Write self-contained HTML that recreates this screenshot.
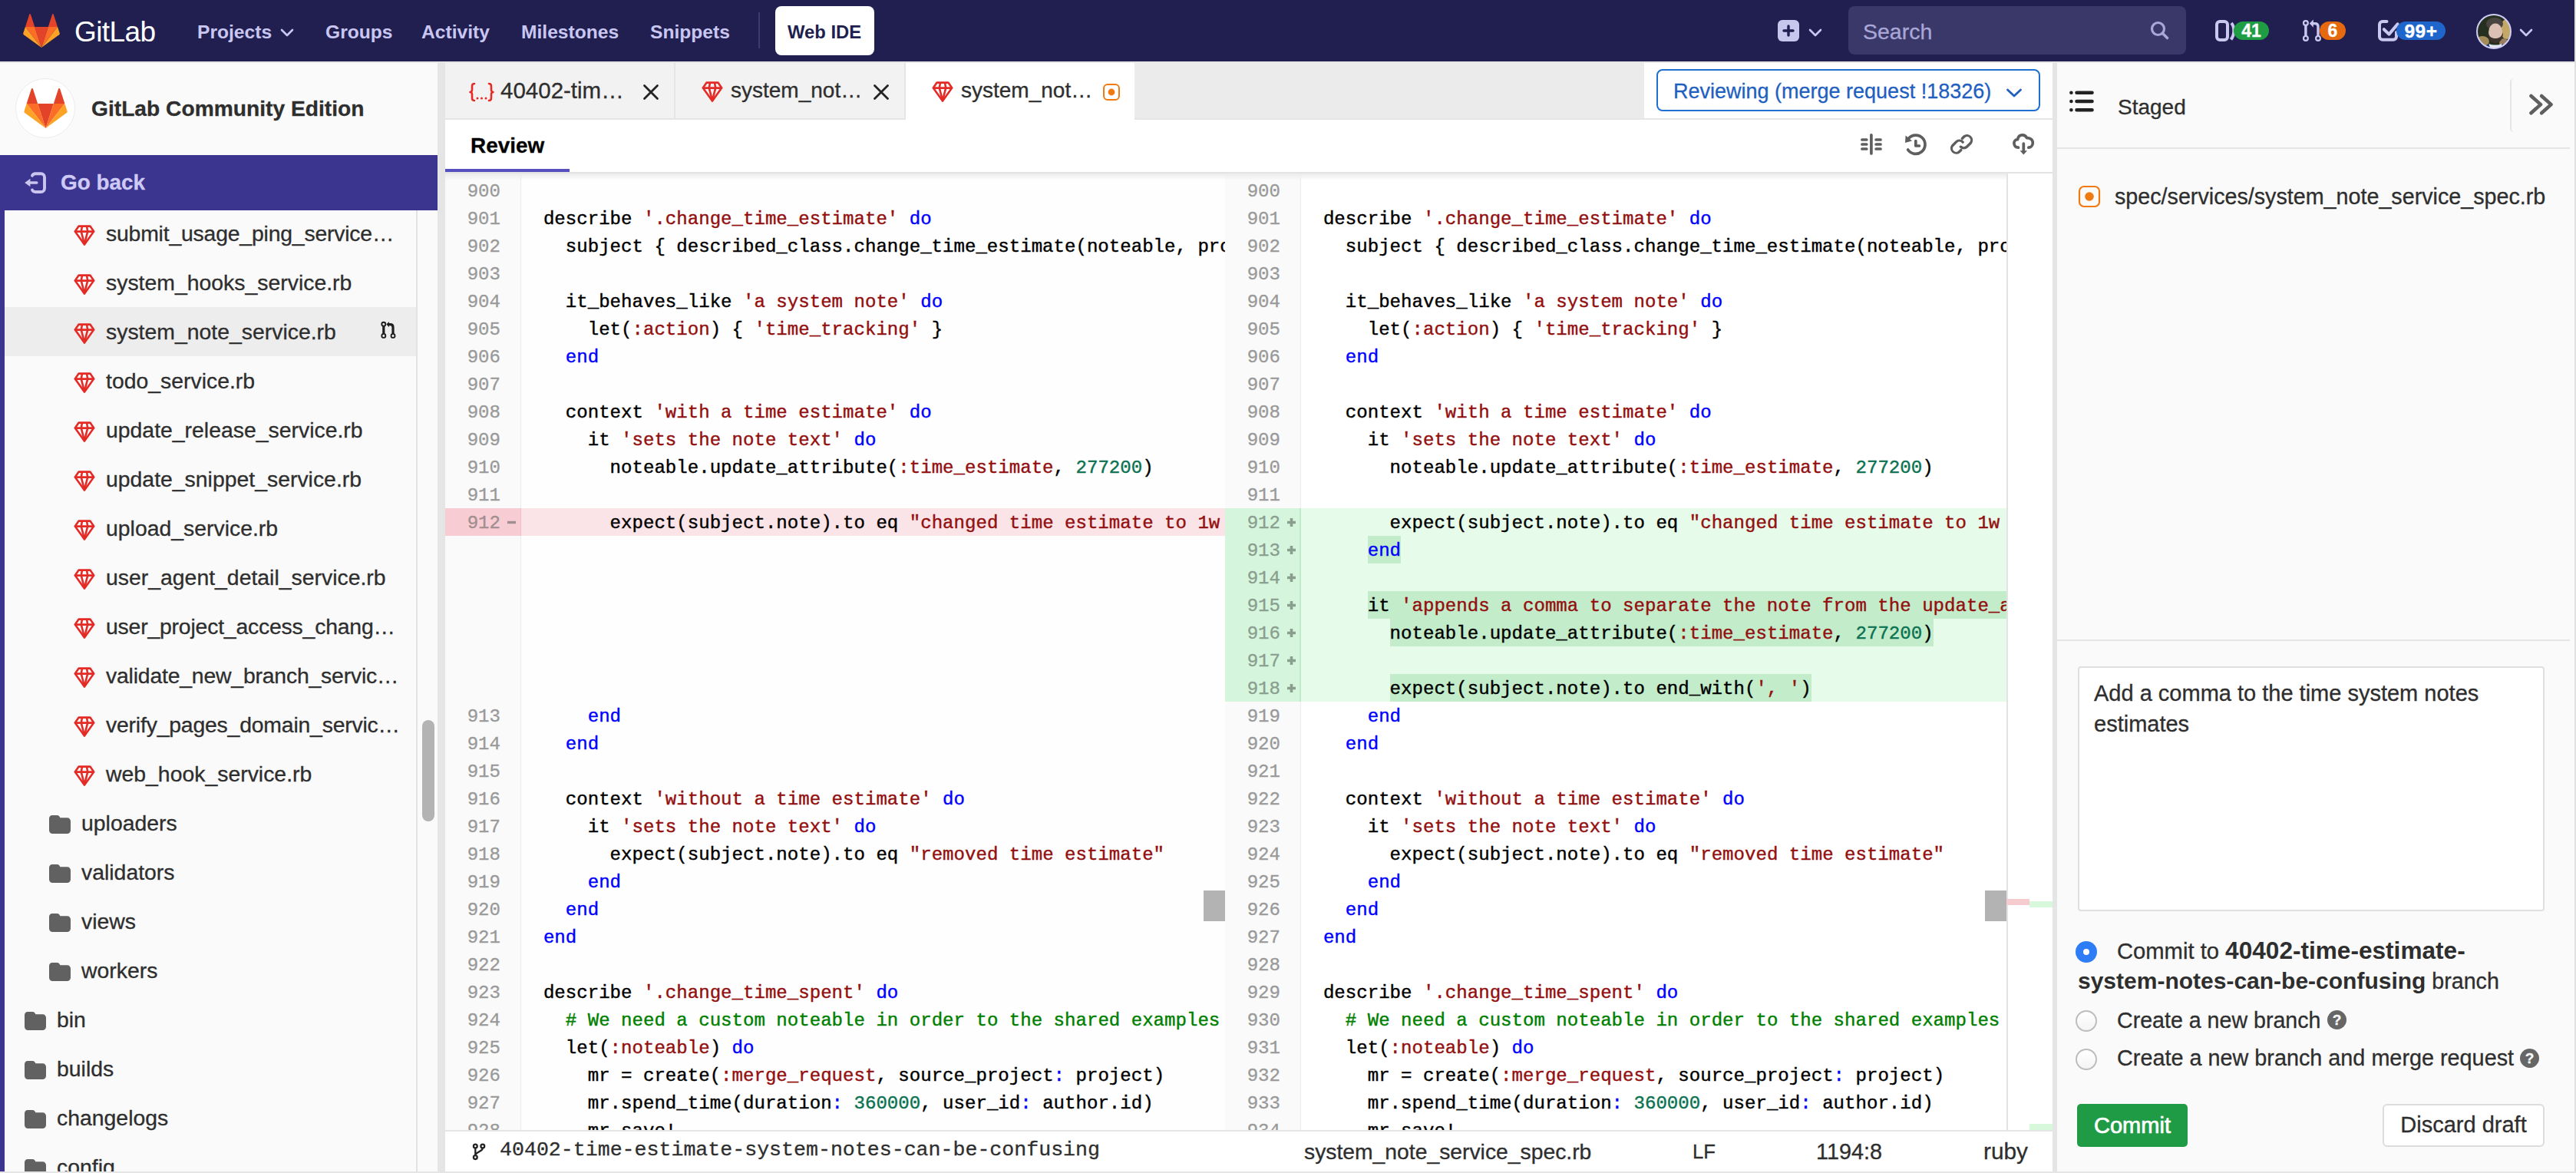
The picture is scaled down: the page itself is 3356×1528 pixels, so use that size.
<!DOCTYPE html>
<html><head><meta charset="utf-8">
<style>
*{box-sizing:border-box;margin:0;padding:0}
html,body{width:3356px;height:1528px;overflow:hidden;background:#fafafa;font-family:"Liberation Sans",sans-serif;color:#2e2e2e;-webkit-text-stroke:0.3px}
b,.nav{-webkit-text-stroke:0}
.a{position:absolute}
#hdr{position:absolute;left:0;top:0;width:3354px;height:80px;background:#201f50}
.nav{position:absolute;top:2px;height:80px;line-height:80px;font-weight:bold;font-size:24.6px;color:#c9c7f2;white-space:nowrap}
.chev{position:absolute}
#side{position:absolute;left:0;top:80px;width:570px;height:1446px;background:#fafafa;overflow:hidden}
.row{position:absolute;left:6px;width:536px;height:64px}
.row.act{background:#ededed}
.gem{position:absolute}
.tn{position:absolute;top:0;line-height:64px;font-size:28.4px;color:#2e2e2e;white-space:nowrap}
.tab{position:absolute;top:82px;height:72px;background:#f2f2f2;border-right:2px solid #e5e5e5}
.tabt{position:absolute;top:0;line-height:72px;font-size:28px;color:#2e2e2e;white-space:nowrap}
.ed{position:absolute;top:224px;height:1248px;overflow:hidden}
.gut{position:absolute;top:0;left:0;width:99px;height:1248px;background:#fafafa;border-right:1px solid #ececec}
.code{position:absolute;top:0;left:99px;height:1248px;overflow:hidden}
.ln{position:absolute;left:0;width:72px;text-align:right;height:36px;line-height:36px;font-family:"Liberation Mono",monospace;font-size:24.08px;color:#999}
.sg{position:absolute;left:78px;width:18px;text-align:center;height:36px;line-height:36px;font-family:"Liberation Mono",monospace;font-size:24px;color:#9aa}
.sg.del{color:#a99}
.sg.add{color:#8a9a8c}
.rg{position:absolute;left:0;width:99px;height:36px}
.rc{position:absolute;left:99px;right:0;height:36px}
.del-g{background:#f7ccd2;border-right:1px solid #f0c0c6}
.del-c{background:#fbe4e7}
.add-g{background:#d5f6dc;border-right:2px solid #c0ebc9}
.ladd{color:#8a9e8f} .ldel{color:#a08e91}
.add-c{background:#e7fbea}
.hl{position:absolute;height:36px;background:#c3ecca;margin-left:99px}
.cl{position:absolute;left:0;height:36px;line-height:36px;font-family:"Liberation Mono",monospace;font-size:24.08px;color:#000;white-space:pre;-webkit-text-stroke:0.4px}
i{font-style:normal}
.s{color:#930f0f} .k{color:#0000ff} .n{color:#0b7252} .c{color:#008000}
.sb{position:absolute;top:-2px;line-height:52px;font-size:28px;color:#2e2e2e;white-space:nowrap}
.radio{position:absolute;left:2704px;width:28px;height:28px;border-radius:50%;border:2px solid #bdbdbd;background:linear-gradient(#fff,#f4f4f4)}
.rl{position:absolute;left:2758px;font-size:28.6px;color:#2e2e2e;white-space:nowrap;line-height:40px}
.q{position:absolute;width:25px;height:25px;border-radius:50%;background:#666;color:#fafafa;font-weight:bold;font-size:19px;text-align:center;line-height:25px}
</style></head><body>

<!-- HEADER -->
<div id="hdr">
  <svg class="a" style="left:30px;top:18px" width="48" height="44" viewBox="0 0 210 194"><path d="M105.06 193.66L143.7 74.73H66.42z" fill="#e24329"/><path d="M105.06 193.65L66.42 74.73H12.27z" fill="#fc6d26"/><path d="M12.27 74.73L.53 110.87c-1.07 3.3.1 6.91 2.9 8.95l101.63 73.84z" fill="#fca326"/><path d="M12.27 74.73h54.15L43.15 3.11c-1.2-3.68-6.41-3.68-7.61 0z" fill="#e24329"/><path d="M105.06 193.65l38.64-118.92h54.15z" fill="#fc6d26"/><path d="M197.85 74.73l11.74 36.14c1.07 3.3-.1 6.91-2.9 8.95l-101.63 73.83z" fill="#fca326"/><path d="M197.85 74.73H143.7l23.26-71.62c1.2-3.68 6.41-3.68 7.61 0z" fill="#e24329"/></svg>
  <div class="a" style="left:97px;top:2px;height:80px;line-height:80px;font-size:37px;color:#fff;letter-spacing:-0.6px;-webkit-text-stroke:0">GitLab</div>
  <div class="nav" style="left:257px">Projects</div>
  <svg class="chev" style="left:365px;top:37px" width="18" height="12" viewBox="0 0 18 12"><path d="M2 2L9 9L16 2" fill="none" stroke="#c9c7f2" stroke-width="2.6" stroke-linecap="round" stroke-linejoin="round"/></svg>
  <div class="nav" style="left:424px">Groups</div>
  <div class="nav" style="left:549px">Activity</div>
  <div class="nav" style="left:679px">Milestones</div>
  <div class="nav" style="left:847px">Snippets</div>
  <div class="a" style="left:988px;top:16px;width:2px;height:47px;background:#3c3a6e"></div>
  <div class="a" style="left:1010px;top:8px;width:129px;height:64px;background:#fff;border-radius:8px"></div>
  <div class="nav" style="left:1026px;color:#201f50;font-size:23.8px">Web IDE</div>

  <div class="a" style="left:2316px;top:26px;width:28px;height:28px;background:#c9c6ee;border-radius:6px"></div>
  <svg class="a" style="left:2316px;top:26px" width="28" height="28" viewBox="0 0 28 28"><path d="M14 8V20M8 14H20" stroke="#201f50" stroke-width="3.4" stroke-linecap="round"/></svg>
  <svg class="chev" style="left:2356px;top:37px" width="18" height="12" viewBox="0 0 18 12"><path d="M2 2L9 9L16 2" fill="none" stroke="#c9c7f2" stroke-width="2.6" stroke-linecap="round" stroke-linejoin="round"/></svg>
  <div class="a" style="left:2408px;top:8px;width:440px;height:63px;background:#3a3869;border-radius:8px"></div>
  <div class="a" style="left:2427px;top:10px;line-height:63px;font-size:28.5px;color:#a9a7d8">Search</div>
  <svg class="a" style="left:2800px;top:27px" width="28" height="26" viewBox="0 0 28 26"><circle cx="11.5" cy="10.5" r="8" fill="none" stroke="#a9a7d8" stroke-width="3.2"/><path d="M17.5 16.5L23.5 22.5" stroke="#a9a7d8" stroke-width="3.6" stroke-linecap="round"/></svg>

  <svg class="a" style="left:2880px;top:18px" width="34" height="44" viewBox="0 0 34 44"><rect x="8" y="10" width="14" height="24" rx="4" fill="none" stroke="#cbc8f0" stroke-width="4"/><path d="M27 12C31.5 17 31.5 27 26.5 33.5" fill="none" stroke="#cbc8f0" stroke-width="4"/></svg>
  <div class="a" style="left:2910px;top:28px;width:46px;height:24px;border-radius:12px;background:#1f9d45;color:#fff;font-weight:bold;font-size:23px;line-height:25px;text-align:center">41</div>
  <svg class="a" style="left:2990px;top:18px" width="34" height="44" viewBox="0 0 34 44"><g fill="none" stroke="#cbc8f0"><circle cx="13.9" cy="12" r="2.9" stroke-width="2.2"/><circle cx="13.9" cy="31.9" r="2.9" stroke-width="2.2"/><circle cx="30" cy="31.9" r="2.9" stroke-width="2.2"/><path d="M13.9 15V28.9M23 12.6H26C28.5 12.6 30 14 30 16.5V28.9" stroke-width="3.4"/></g><path d="M18.8 12.6L23.8 7.4V17.8Z" fill="#cbc8f0"/></svg>
  <div class="a" style="left:3022px;top:28px;width:34px;height:24px;border-radius:12px;background:#e6690f;color:#fff;font-weight:bold;font-size:23px;line-height:25px;text-align:center">6</div>
  <svg class="a" style="left:3090px;top:18px" width="40" height="44" viewBox="0 0 40 44"><g fill="none" stroke="#cbc8f0" stroke-width="4" stroke-linecap="round" stroke-linejoin="round"><path d="M19.5 10H14A4 4 0 0 0 10 14V29.7A4 4 0 0 0 14 33.7H28A4 4 0 0 0 32 29.7V24"/><path d="M15.8 20.2L22.4 26.6L33.6 13.4"/></g></svg>
  <div class="a" style="left:3122px;top:28px;width:64px;height:24px;border-radius:12px;background:#1f66cc;color:#fff;font-weight:bold;font-size:24.5px;line-height:25px;text-align:center;letter-spacing:0.5px">99+</div>
  <svg class="a" style="left:3226px;top:18px" width="46" height="46" viewBox="0 0 46 46"><defs><clipPath id="av"><circle cx="23" cy="23" r="22"/></clipPath></defs><g clip-path="url(#av)"><rect width="46" height="46" fill="#263020"/><ellipse cx="40" cy="20" rx="9" ry="13" fill="#c4a868"/><ellipse cx="8" cy="36" rx="9" ry="7" fill="#a48c58"/><ellipse cx="36" cy="38" rx="6" ry="6" fill="#9a8060"/><ellipse cx="24" cy="13" rx="11" ry="8" fill="#4a4440"/><ellipse cx="25" cy="24" rx="9" ry="11.5" fill="#dcc0b4"/><path d="M15 24C15 33 19 38 25 38C31 38 35 33 35 24C33 30 30 32 25 32C20 32 17 30 15 24Z" fill="#3e322c"/><path d="M14 46L17 39C20 41 30 41 33 39L36 46Z" fill="#e6e8f0"/><path d="M6 46L16 39L19 46Z M44 46L34 39L31 46Z" fill="#1c3a7a"/></g><circle cx="23" cy="23" r="22" fill="none" stroke="#d0cdf5" stroke-width="2"/></svg>
  <svg class="chev" style="left:3282px;top:37px" width="18" height="12" viewBox="0 0 18 12"><path d="M2 2L9 9L16 2" fill="none" stroke="#c9c7f2" stroke-width="2.6" stroke-linecap="round" stroke-linejoin="round"/></svg>
</div>
<div class="a" style="left:3354px;top:0;width:2px;height:1528px;background:#e0e0e0"></div>
<div class="a" style="left:0;top:1526px;width:3356px;height:2px;background:#e5e5e5"></div>

<!-- SIDEBAR -->
<div id="side">
  <div class="a" style="left:20px;top:22px;width:78px;height:78px;border-radius:50%;background:#fff;border:1px solid #ececec"></div>
  <svg class="a" style="left:31px;top:35px" width="57" height="52" viewBox="0 0 210 194"><path d="M105.06 193.66L143.7 74.73H66.42z" fill="#e24329"/><path d="M105.06 193.65L66.42 74.73H12.27z" fill="#fc6d26"/><path d="M12.27 74.73L.53 110.87c-1.07 3.3.1 6.91 2.9 8.95l101.63 73.84z" fill="#fca326"/><path d="M12.27 74.73h54.15L43.15 3.11c-1.2-3.68-6.41-3.68-7.61 0z" fill="#e24329"/><path d="M105.06 193.65l38.64-118.92h54.15z" fill="#fc6d26"/><path d="M197.85 74.73l11.74 36.14c1.07 3.3-.1 6.91-2.9 8.95l-101.63 73.83z" fill="#fca326"/><path d="M197.85 74.73H143.7l23.26-71.62c1.2-3.68 6.41-3.68 7.61 0z" fill="#e24329"/></svg>
  <div class="a" style="left:119px;top:22px;line-height:78px;font-size:28.2px;font-weight:bold;color:#2e2e2e;white-space:nowrap">GitLab Community Edition</div>
</div>
<div class="a" style="left:0;top:202px;width:570px;height:72px;background:#3b3590"></div>
<svg class="a" style="left:25px;top:215px" width="50" height="45" viewBox="0 0 50 45"><path d="M17 13.8A4.5 4.5 0 0 1 21 11.2H28.5A4.5 4.5 0 0 1 33 15.7V30.5A4.5 4.5 0 0 1 28.5 35H21A4.5 4.5 0 0 1 17 32.5" fill="none" stroke="#c9c5ee" stroke-width="3.9" stroke-linecap="round"/><path d="M7.2 23L14.4 17.8V21.2H22.8A1.8 1.8 0 0 1 22.8 24.8H14.4V28.2Z" fill="#c9c5ee"/></svg>
<div class="a" style="left:79px;top:202px;line-height:72px;font-size:27.9px;font-weight:bold;color:#cfcaf5">Go back</div>
<div class="a" style="left:0;top:274px;width:6px;height:1252px;background:#3b3590"></div>
<div class="a" style="left:0;top:0;width:570px;height:1526px;overflow:hidden;pointer-events:none">
<div class="row" style="top:272px"><svg class="gem" style="left:90px;top:20px" width="28" height="28" viewBox="0 0 28 28"><g fill="none" stroke="#e52b26" stroke-width="2.6" stroke-linejoin="round"><path d="M6.6 2.6H21.4L26.2 9.6L14 26.6L1.8 9.6Z"/><path d="M1.8 9.6H26.2M11 2.6L9.8 9.6L14 26M17 2.6L18.2 9.6L14 26"/></g></svg><span class="tn" style="left:132px;letter-spacing:-0.2px">submit_usage_ping_service…</span></div><div class="row" style="top:336px"><svg class="gem" style="left:90px;top:20px" width="28" height="28" viewBox="0 0 28 28"><g fill="none" stroke="#e52b26" stroke-width="2.6" stroke-linejoin="round"><path d="M6.6 2.6H21.4L26.2 9.6L14 26.6L1.8 9.6Z"/><path d="M1.8 9.6H26.2M11 2.6L9.8 9.6L14 26M17 2.6L18.2 9.6L14 26"/></g></svg><span class="tn" style="left:132px">system_hooks_service.rb</span></div><div class="row act" style="top:400px"><svg class="gem" style="left:90px;top:20px" width="28" height="28" viewBox="0 0 28 28"><g fill="none" stroke="#e52b26" stroke-width="2.6" stroke-linejoin="round"><path d="M6.6 2.6H21.4L26.2 9.6L14 26.6L1.8 9.6Z"/><path d="M1.8 9.6H26.2M11 2.6L9.8 9.6L14 26M17 2.6L18.2 9.6L14 26"/></g></svg><span class="tn" style="left:132px">system_note_service.rb</span></div><div class="row" style="top:464px"><svg class="gem" style="left:90px;top:20px" width="28" height="28" viewBox="0 0 28 28"><g fill="none" stroke="#e52b26" stroke-width="2.6" stroke-linejoin="round"><path d="M6.6 2.6H21.4L26.2 9.6L14 26.6L1.8 9.6Z"/><path d="M1.8 9.6H26.2M11 2.6L9.8 9.6L14 26M17 2.6L18.2 9.6L14 26"/></g></svg><span class="tn" style="left:132px">todo_service.rb</span></div><div class="row" style="top:528px"><svg class="gem" style="left:90px;top:20px" width="28" height="28" viewBox="0 0 28 28"><g fill="none" stroke="#e52b26" stroke-width="2.6" stroke-linejoin="round"><path d="M6.6 2.6H21.4L26.2 9.6L14 26.6L1.8 9.6Z"/><path d="M1.8 9.6H26.2M11 2.6L9.8 9.6L14 26M17 2.6L18.2 9.6L14 26"/></g></svg><span class="tn" style="left:132px">update_release_service.rb</span></div><div class="row" style="top:592px"><svg class="gem" style="left:90px;top:20px" width="28" height="28" viewBox="0 0 28 28"><g fill="none" stroke="#e52b26" stroke-width="2.6" stroke-linejoin="round"><path d="M6.6 2.6H21.4L26.2 9.6L14 26.6L1.8 9.6Z"/><path d="M1.8 9.6H26.2M11 2.6L9.8 9.6L14 26M17 2.6L18.2 9.6L14 26"/></g></svg><span class="tn" style="left:132px">update_snippet_service.rb</span></div><div class="row" style="top:656px"><svg class="gem" style="left:90px;top:20px" width="28" height="28" viewBox="0 0 28 28"><g fill="none" stroke="#e52b26" stroke-width="2.6" stroke-linejoin="round"><path d="M6.6 2.6H21.4L26.2 9.6L14 26.6L1.8 9.6Z"/><path d="M1.8 9.6H26.2M11 2.6L9.8 9.6L14 26M17 2.6L18.2 9.6L14 26"/></g></svg><span class="tn" style="left:132px">upload_service.rb</span></div><div class="row" style="top:720px"><svg class="gem" style="left:90px;top:20px" width="28" height="28" viewBox="0 0 28 28"><g fill="none" stroke="#e52b26" stroke-width="2.6" stroke-linejoin="round"><path d="M6.6 2.6H21.4L26.2 9.6L14 26.6L1.8 9.6Z"/><path d="M1.8 9.6H26.2M11 2.6L9.8 9.6L14 26M17 2.6L18.2 9.6L14 26"/></g></svg><span class="tn" style="left:132px">user_agent_detail_service.rb</span></div><div class="row" style="top:784px"><svg class="gem" style="left:90px;top:20px" width="28" height="28" viewBox="0 0 28 28"><g fill="none" stroke="#e52b26" stroke-width="2.6" stroke-linejoin="round"><path d="M6.6 2.6H21.4L26.2 9.6L14 26.6L1.8 9.6Z"/><path d="M1.8 9.6H26.2M11 2.6L9.8 9.6L14 26M17 2.6L18.2 9.6L14 26"/></g></svg><span class="tn" style="left:132px;letter-spacing:-0.2px">user_project_access_chang…</span></div><div class="row" style="top:848px"><svg class="gem" style="left:90px;top:20px" width="28" height="28" viewBox="0 0 28 28"><g fill="none" stroke="#e52b26" stroke-width="2.6" stroke-linejoin="round"><path d="M6.6 2.6H21.4L26.2 9.6L14 26.6L1.8 9.6Z"/><path d="M1.8 9.6H26.2M11 2.6L9.8 9.6L14 26M17 2.6L18.2 9.6L14 26"/></g></svg><span class="tn" style="left:132px;letter-spacing:-0.2px">validate_new_branch_servic…</span></div><div class="row" style="top:912px"><svg class="gem" style="left:90px;top:20px" width="28" height="28" viewBox="0 0 28 28"><g fill="none" stroke="#e52b26" stroke-width="2.6" stroke-linejoin="round"><path d="M6.6 2.6H21.4L26.2 9.6L14 26.6L1.8 9.6Z"/><path d="M1.8 9.6H26.2M11 2.6L9.8 9.6L14 26M17 2.6L18.2 9.6L14 26"/></g></svg><span class="tn" style="left:132px;letter-spacing:-0.2px">verify_pages_domain_servic…</span></div><div class="row" style="top:976px"><svg class="gem" style="left:90px;top:20px" width="28" height="28" viewBox="0 0 28 28"><g fill="none" stroke="#e52b26" stroke-width="2.6" stroke-linejoin="round"><path d="M6.6 2.6H21.4L26.2 9.6L14 26.6L1.8 9.6Z"/><path d="M1.8 9.6H26.2M11 2.6L9.8 9.6L14 26M17 2.6L18.2 9.6L14 26"/></g></svg><span class="tn" style="left:132px">web_hook_service.rb</span></div><div class="row" style="top:1040px"><svg style="position:absolute;left:58px;top:22px" width="28" height="24" viewBox="0 0 28 24"><path fill="#616161" d="M4 0H10.5C12 0 13 .8 13.8 2.2L14.4 3.2H23.5C26 3.2 28 5.2 28 7.7V19.5C28 22 26 24 23.5 24H4.5C2 24 0 22 0 19.5V4C0 1.8 1.8 0 4 0Z"/></svg><span class="tn" style="left:100px">uploaders</span></div><div class="row" style="top:1104px"><svg style="position:absolute;left:58px;top:22px" width="28" height="24" viewBox="0 0 28 24"><path fill="#616161" d="M4 0H10.5C12 0 13 .8 13.8 2.2L14.4 3.2H23.5C26 3.2 28 5.2 28 7.7V19.5C28 22 26 24 23.5 24H4.5C2 24 0 22 0 19.5V4C0 1.8 1.8 0 4 0Z"/></svg><span class="tn" style="left:100px">validators</span></div><div class="row" style="top:1168px"><svg style="position:absolute;left:58px;top:22px" width="28" height="24" viewBox="0 0 28 24"><path fill="#616161" d="M4 0H10.5C12 0 13 .8 13.8 2.2L14.4 3.2H23.5C26 3.2 28 5.2 28 7.7V19.5C28 22 26 24 23.5 24H4.5C2 24 0 22 0 19.5V4C0 1.8 1.8 0 4 0Z"/></svg><span class="tn" style="left:100px">views</span></div><div class="row" style="top:1232px"><svg style="position:absolute;left:58px;top:22px" width="28" height="24" viewBox="0 0 28 24"><path fill="#616161" d="M4 0H10.5C12 0 13 .8 13.8 2.2L14.4 3.2H23.5C26 3.2 28 5.2 28 7.7V19.5C28 22 26 24 23.5 24H4.5C2 24 0 22 0 19.5V4C0 1.8 1.8 0 4 0Z"/></svg><span class="tn" style="left:100px">workers</span></div><div class="row" style="top:1296px"><svg style="position:absolute;left:26px;top:22px" width="28" height="24" viewBox="0 0 28 24"><path fill="#616161" d="M4 0H10.5C12 0 13 .8 13.8 2.2L14.4 3.2H23.5C26 3.2 28 5.2 28 7.7V19.5C28 22 26 24 23.5 24H4.5C2 24 0 22 0 19.5V4C0 1.8 1.8 0 4 0Z"/></svg><span class="tn" style="left:68px">bin</span></div><div class="row" style="top:1360px"><svg style="position:absolute;left:26px;top:22px" width="28" height="24" viewBox="0 0 28 24"><path fill="#616161" d="M4 0H10.5C12 0 13 .8 13.8 2.2L14.4 3.2H23.5C26 3.2 28 5.2 28 7.7V19.5C28 22 26 24 23.5 24H4.5C2 24 0 22 0 19.5V4C0 1.8 1.8 0 4 0Z"/></svg><span class="tn" style="left:68px">builds</span></div><div class="row" style="top:1424px"><svg style="position:absolute;left:26px;top:22px" width="28" height="24" viewBox="0 0 28 24"><path fill="#616161" d="M4 0H10.5C12 0 13 .8 13.8 2.2L14.4 3.2H23.5C26 3.2 28 5.2 28 7.7V19.5C28 22 26 24 23.5 24H4.5C2 24 0 22 0 19.5V4C0 1.8 1.8 0 4 0Z"/></svg><span class="tn" style="left:68px">changelogs</span></div><div class="row" style="top:1488px"><svg style="position:absolute;left:26px;top:22px" width="28" height="24" viewBox="0 0 28 24"><path fill="#616161" d="M4 0H10.5C12 0 13 .8 13.8 2.2L14.4 3.2H23.5C26 3.2 28 5.2 28 7.7V19.5C28 22 26 24 23.5 24H4.5C2 24 0 22 0 19.5V4C0 1.8 1.8 0 4 0Z"/></svg><span class="tn" style="left:68px">config</span></div>
</div>
<svg class="a" style="left:480px;top:405px" width="50" height="50" viewBox="0 0 50 50"><g fill="none" stroke="#1e1e1e"><circle cx="19.8" cy="17.3" r="2.5" stroke-width="1.9"/><circle cx="19.8" cy="32.4" r="2.5" stroke-width="1.9"/><circle cx="32" cy="32.4" r="2.5" stroke-width="1.9"/><path d="M19.8 20V29.8M26 17.6H28.5C30.8 17.6 32 19 32 21.2V29.8" stroke-width="3.2"/></g><path d="M23.4 17.6L26.9 13.9V21.3Z" fill="#1e1e1e"/></svg>
<div class="a" style="left:542px;top:274px;width:2px;height:1252px;background:#e2e2e2"></div>
<div class="a" style="left:0;top:80px;width:570px;height:2px;background:#e5e5e5"></div>
<div class="a" style="left:550px;top:938px;width:16px;height:132px;border-radius:8px;background:#b3b3b3"></div>
<div class="a" style="left:570px;top:80px;width:10px;height:1446px;background:#e5e5e5"></div>

<!-- TABS -->
<div class="a" style="left:580px;top:80px;width:2094px;height:76px;background:#ebebeb;border-top:2px solid #e5e5e5;border-bottom:2px solid #e5e5e5"></div>
<div class="tab" style="left:580px;width:300px"></div>
<div class="tab" style="left:880px;width:300px"></div>
<div class="a" style="left:1180px;top:82px;width:298px;height:74px;background:#fff"></div>
<div class="a" style="left:2142px;top:82px;width:532px;height:72px;background:#fff"></div>
<div class="a" style="left:1478px;top:82px;width:664px;height:74px;background:#ebebeb;border-bottom:2px solid #e5e5e5;border-bottom-left-radius:6px"></div>
<div class="a" style="left:1478px;top:150px;width:8px;height:6px;background:#fff;z-index:-1"></div>
<svg class="a" style="left:610px;top:106px" width="36" height="28" viewBox="0 0 36 28"><g fill="none" stroke="#e52b26" stroke-width="2.6" stroke-linecap="round" stroke-linejoin="round"><path d="M8 3C5 3 5 5 5 8V11C5 13 4 14 2.5 14C4 14 5 15 5 17V20C5 23 5 25 8 25"/><path d="M27 3C30 3 30 5 30 8V11C30 13 31 14 32.5 14C31 14 30 15 30 17V20C30 23 30 25 27 25"/></g><g fill="#e52b26"><circle cx="12" cy="22" r="1.5"/><circle cx="17.5" cy="22" r="1.5"/><circle cx="23" cy="22" r="1.5"/></g></svg>
<div class="tabt" style="left:652px;top:82px;font-size:29.5px">40402-tim…</div>
<svg class="a" style="left:836px;top:108px" width="24" height="24" viewBox="0 0 24 24"><path d="M3.5 3.5L20.5 20.5M20.5 3.5L3.5 20.5" stroke="#222" stroke-width="2.8" stroke-linecap="round"/></svg>
<svg class="gem"  style="position:absolute;left:914px;top:105px" width="28" height="28" viewBox="0 0 28 28"><g fill="none" stroke="#e52b26" stroke-width="2.6" stroke-linejoin="round"><path d="M6.6 2.6H21.4L26.2 9.6L14 26.6L1.8 9.6Z"/><path d="M1.8 9.6H26.2M11 2.6L9.8 9.6L14 26M17 2.6L18.2 9.6L14 26"/></g></svg>
<div class="tabt" style="left:952px;top:82px">system_not…</div>
<svg class="a" style="left:1136px;top:108px" width="24" height="24" viewBox="0 0 24 24"><path d="M3.5 3.5L20.5 20.5M20.5 3.5L3.5 20.5" stroke="#222" stroke-width="2.8" stroke-linecap="round"/></svg>
<svg class="gem" style="position:absolute;left:1214px;top:105px" width="28" height="28" viewBox="0 0 28 28"><g fill="none" stroke="#e52b26" stroke-width="2.6" stroke-linejoin="round"><path d="M6.6 2.6H21.4L26.2 9.6L14 26.6L1.8 9.6Z"/><path d="M1.8 9.6H26.2M11 2.6L9.8 9.6L14 26M17 2.6L18.2 9.6L14 26"/></g></svg>
<div class="tabt" style="left:1252px;top:82px">system_not…</div>
<svg class="a" style="left:1436px;top:108px" width="24" height="24" viewBox="0 0 24 24"><rect x="2" y="2" width="20" height="20" rx="5" fill="none" stroke="#f07a12" stroke-width="2"/><circle cx="12" cy="12" r="4.4" fill="#f07a12"/></svg>
<div class="a" style="left:2158px;top:90px;width:500px;height:55px;border:2px solid #1f6fd0;border-radius:8px;background:#fff"></div>
<div class="a" style="left:2180px;top:92px;line-height:55px;font-size:27px;color:#1f5fc0;white-space:nowrap">Reviewing (merge request !18326)</div>
<svg class="chev" style="left:2613px;top:113px" width="22" height="16" viewBox="0 0 22 16"><path d="M2.5 4L11 12L19.5 4" fill="none" stroke="#1f5fc0" stroke-width="2.8" stroke-linecap="round" stroke-linejoin="round"/></svg>

<!-- REVIEW BAR -->
<div class="a" style="left:580px;top:156px;width:2094px;height:68px;background:#fff"></div>
<div class="a" style="left:613px;top:156px;line-height:68px;font-size:27.9px;font-weight:bold;color:#000">Review</div>
<div class="a" style="left:580px;top:220px;width:162px;height:4px;background:#554fbf"></div>
<!-- toolbar icons -->
<svg class="a" style="left:2410px;top:165px" width="260" height="45" viewBox="0 0 260 45"><g fill="none" stroke="#5e5e5e" stroke-width="3.7" stroke-linecap="round" stroke-linejoin="round">
<path d="M27.9 10.8V35"/><path d="M15.9 17H21.8M15.9 23H21.8M15.9 29H21.8M34.1 17H40M34.1 23H40M34.1 29H40"/>
<path d="M75.6 30A12.2 12.2 0 1 0 76.6 15.2"/><path d="M85.8 18.6V25H90.4"/>
<path d="M219.5 27.2C216 27.2 213.9 24.8 213.9 21.6C213.9 18.6 216 16.6 218.6 16.6C219.3 12.6 222 10.9 224.8 10.9C227.6 10.9 229.6 12.6 230.6 14.6C234.6 14.6 238.3 16.8 238.3 21C238.3 24.8 235.6 27.2 232.8 27.2" stroke-dasharray="none"/>
<path d="M226.3 22V32"/></g>
<path d="M72.6 11.6L72 21L81 18.6Z" fill="#5e5e5e"/>
<path d="M221.6 31.2H231L226.3 36.4Z" fill="#5e5e5e"/>
<g transform="translate(131.8 9.2) scale(1.72)" fill="#5e5e5e"><path d="M6.7 11.8l-1.4 1.4a2.5 2.5 0 0 1-3.5-3.5l2.8-2.8a2.5 2.5 0 0 1 3.5 0 1 1 0 1 0 1.4-1.4 4.5 4.5 0 0 0-6.3 0L.4 8.3a4.5 4.5 0 0 0 6.3 6.3l1.4-1.4a1 1 0 1 0-1.4-1.4zm2.6-7.6l1.4-1.4a2.5 2.5 0 0 1 3.5 3.5l-2.8 2.8a2.5 2.5 0 0 1-3.5 0 1 1 0 0 0-1.4 1.4 4.5 4.5 0 0 0 6.3 0l2.8-2.8A4.5 4.5 0 0 0 9.3 1.4L7.9 2.8a1 1 0 1 0 1.4 1.4z"/></g>
</svg>
<!-- EDITOR LEFT -->
<div class="ed" style="left:580px;width:1016px;background:#fefefe">
  <div class="gut"></div>
  <div class="rg del-g" style="top:438px"></div><div class="rc del-c" style="top:438px"></div>
  <div class="a" style="left:0;top:0;width:99px;height:1248px"><div class="ln" style="top:8px">900</div><div class="ln" style="top:44px">901</div><div class="ln" style="top:80px">902</div><div class="ln" style="top:116px">903</div><div class="ln" style="top:152px">904</div><div class="ln" style="top:188px">905</div><div class="ln" style="top:224px">906</div><div class="ln" style="top:260px">907</div><div class="ln" style="top:296px">908</div><div class="ln" style="top:332px">909</div><div class="ln" style="top:368px">910</div><div class="ln" style="top:404px">911</div><div class="ln ldel" style="top:440px">912</div><svg class="a" style="left:81px;top:451px" width="11" height="11" viewBox="0 0 11 11"><path d="M0 5.5H11" stroke="#a08e91" stroke-width="3.4"/></svg><div class="ln" style="top:692px">913</div><div class="ln" style="top:728px">914</div><div class="ln" style="top:764px">915</div><div class="ln" style="top:800px">916</div><div class="ln" style="top:836px">917</div><div class="ln" style="top:872px">918</div><div class="ln" style="top:908px">919</div><div class="ln" style="top:944px">920</div><div class="ln" style="top:980px">921</div><div class="ln" style="top:1016px">922</div><div class="ln" style="top:1052px">923</div><div class="ln" style="top:1088px">924</div><div class="ln" style="top:1124px">925</div><div class="ln" style="top:1160px">926</div><div class="ln" style="top:1196px">927</div><div class="ln" style="top:1232px">928</div><div class="ln" style="top:1268px">929</div></div>
  <div class="code" style="width:917px"><div class="cl" style="top:44px">  describe <i class="s">&#x27;.change_time_estimate&#x27;</i> <i class="k">do</i></div><div class="cl" style="top:80px">    subject { described_class.change_time_estimate(noteable, project, author) }</div><div class="cl" style="top:152px">    it_behaves_like <i class="s">&#x27;a system note&#x27;</i> <i class="k">do</i></div><div class="cl" style="top:188px">      let(<i class="s">:action</i>) { <i class="s">&#x27;time_tracking&#x27;</i> }</div><div class="cl" style="top:224px">    <i class="k">end</i></div><div class="cl" style="top:296px">    context <i class="s">&#x27;with a time estimate&#x27;</i> <i class="k">do</i></div><div class="cl" style="top:332px">      it <i class="s">&#x27;sets the note text&#x27;</i> <i class="k">do</i></div><div class="cl" style="top:368px">        noteable.update_attribute(<i class="s">:time_estimate</i>, <i class="n">277200</i>)</div><div class="cl" style="top:440px">        expect(subject.note).to eq <i class="s">&quot;changed time estimate to 1w 4d 5h&quot;</i></div><div class="cl" style="top:692px">      <i class="k">end</i></div><div class="cl" style="top:728px">    <i class="k">end</i></div><div class="cl" style="top:800px">    context <i class="s">&#x27;without a time estimate&#x27;</i> <i class="k">do</i></div><div class="cl" style="top:836px">      it <i class="s">&#x27;sets the note text&#x27;</i> <i class="k">do</i></div><div class="cl" style="top:872px">        expect(subject.note).to eq <i class="s">&quot;removed time estimate&quot;</i></div><div class="cl" style="top:908px">      <i class="k">end</i></div><div class="cl" style="top:944px">    <i class="k">end</i></div><div class="cl" style="top:980px">  <i class="k">end</i></div><div class="cl" style="top:1052px">  describe <i class="s">&#x27;.change_time_spent&#x27;</i> <i class="k">do</i></div><div class="cl" style="top:1088px">    <i class="c"># We need a custom noteable in order to the shared examples to be green.</i></div><div class="cl" style="top:1124px">    let(<i class="s">:noteable</i>) <i class="k">do</i></div><div class="cl" style="top:1160px">      mr = create(<i class="s">:merge_request</i>, source_project<i class="k">:</i> project)</div><div class="cl" style="top:1196px">      mr.spend_time(duration<i class="k">:</i> <i class="n">360000</i>, user_id<i class="k">:</i> author.id)</div><div class="cl" style="top:1232px">      mr.save!</div><div class="cl" style="top:1268px">      mr</div></div>
  <div class="a" style="left:988px;top:936px;width:28px;height:40px;background:#b3b3b3"></div>
</div>
<!-- EDITOR RIGHT -->
<div class="ed" style="left:1596px;width:1018px;background:#fff">
  <div class="gut"></div>
  <div class="rg add-g" style="top:438px"></div><div class="rc add-c" style="top:438px"></div><div class="rg add-g" style="top:474px"></div><div class="rc add-c" style="top:474px"></div><div class="hl" style="top:474px;left:86.70px;width:43.35px"></div><div class="rg add-g" style="top:510px"></div><div class="rc add-c" style="top:510px"></div><div class="rg add-g" style="top:546px"></div><div class="rc add-c" style="top:546px"></div><div class="hl" style="top:546px;left:86.70px;width:982.60px"></div><div class="rg add-g" style="top:582px"></div><div class="rc add-c" style="top:582px"></div><div class="hl" style="top:582px;left:115.60px;width:708.05px"></div><div class="rg add-g" style="top:618px"></div><div class="rc add-c" style="top:618px"></div><div class="rg add-g" style="top:654px"></div><div class="rc add-c" style="top:654px"></div><div class="hl" style="top:654px;left:115.60px;width:549.10px"></div>
  <div class="a" style="left:0;top:0;width:99px;height:1248px"><div class="ln" style="top:8px">900</div><div class="ln" style="top:44px">901</div><div class="ln" style="top:80px">902</div><div class="ln" style="top:116px">903</div><div class="ln" style="top:152px">904</div><div class="ln" style="top:188px">905</div><div class="ln" style="top:224px">906</div><div class="ln" style="top:260px">907</div><div class="ln" style="top:296px">908</div><div class="ln" style="top:332px">909</div><div class="ln" style="top:368px">910</div><div class="ln" style="top:404px">911</div><div class="ln ladd" style="top:440px">912</div><svg class="a" style="left:81px;top:451px" width="11" height="11" viewBox="0 0 11 11"><path d="M5.5 0V11M0 5.5H11" stroke="#8a9e8f" stroke-width="3.6"/></svg><div class="ln ladd" style="top:476px">913</div><svg class="a" style="left:81px;top:487px" width="11" height="11" viewBox="0 0 11 11"><path d="M5.5 0V11M0 5.5H11" stroke="#8a9e8f" stroke-width="3.6"/></svg><div class="ln ladd" style="top:512px">914</div><svg class="a" style="left:81px;top:523px" width="11" height="11" viewBox="0 0 11 11"><path d="M5.5 0V11M0 5.5H11" stroke="#8a9e8f" stroke-width="3.6"/></svg><div class="ln ladd" style="top:548px">915</div><svg class="a" style="left:81px;top:559px" width="11" height="11" viewBox="0 0 11 11"><path d="M5.5 0V11M0 5.5H11" stroke="#8a9e8f" stroke-width="3.6"/></svg><div class="ln ladd" style="top:584px">916</div><svg class="a" style="left:81px;top:595px" width="11" height="11" viewBox="0 0 11 11"><path d="M5.5 0V11M0 5.5H11" stroke="#8a9e8f" stroke-width="3.6"/></svg><div class="ln ladd" style="top:620px">917</div><svg class="a" style="left:81px;top:631px" width="11" height="11" viewBox="0 0 11 11"><path d="M5.5 0V11M0 5.5H11" stroke="#8a9e8f" stroke-width="3.6"/></svg><div class="ln ladd" style="top:656px">918</div><svg class="a" style="left:81px;top:667px" width="11" height="11" viewBox="0 0 11 11"><path d="M5.5 0V11M0 5.5H11" stroke="#8a9e8f" stroke-width="3.6"/></svg><div class="ln" style="top:692px">919</div><div class="ln" style="top:728px">920</div><div class="ln" style="top:764px">921</div><div class="ln" style="top:800px">922</div><div class="ln" style="top:836px">923</div><div class="ln" style="top:872px">924</div><div class="ln" style="top:908px">925</div><div class="ln" style="top:944px">926</div><div class="ln" style="top:980px">927</div><div class="ln" style="top:1016px">928</div><div class="ln" style="top:1052px">929</div><div class="ln" style="top:1088px">930</div><div class="ln" style="top:1124px">931</div><div class="ln" style="top:1160px">932</div><div class="ln" style="top:1196px">933</div><div class="ln" style="top:1232px">934</div><div class="ln" style="top:1268px">935</div></div>
  <div class="code" style="width:919px"><div class="cl" style="top:44px">  describe <i class="s">&#x27;.change_time_estimate&#x27;</i> <i class="k">do</i></div><div class="cl" style="top:80px">    subject { described_class.change_time_estimate(noteable, project, author) }</div><div class="cl" style="top:152px">    it_behaves_like <i class="s">&#x27;a system note&#x27;</i> <i class="k">do</i></div><div class="cl" style="top:188px">      let(<i class="s">:action</i>) { <i class="s">&#x27;time_tracking&#x27;</i> }</div><div class="cl" style="top:224px">    <i class="k">end</i></div><div class="cl" style="top:296px">    context <i class="s">&#x27;with a time estimate&#x27;</i> <i class="k">do</i></div><div class="cl" style="top:332px">      it <i class="s">&#x27;sets the note text&#x27;</i> <i class="k">do</i></div><div class="cl" style="top:368px">        noteable.update_attribute(<i class="s">:time_estimate</i>, <i class="n">277200</i>)</div><div class="cl" style="top:440px">        expect(subject.note).to eq <i class="s">&quot;changed time estimate to 1w 4d 5h,&quot;</i></div><div class="cl" style="top:476px">      <i class="k">end</i></div><div class="cl" style="top:548px">      it <i class="s">&#x27;appends a comma to separate the note from the update_at time&#x27;</i> <i class="k">do</i></div><div class="cl" style="top:584px">        noteable.update_attribute(<i class="s">:time_estimate</i>, <i class="n">277200</i>)</div><div class="cl" style="top:656px">        expect(subject.note).to end_with(<i class="s">&#x27;, &#x27;</i>)</div><div class="cl" style="top:692px">      <i class="k">end</i></div><div class="cl" style="top:728px">    <i class="k">end</i></div><div class="cl" style="top:800px">    context <i class="s">&#x27;without a time estimate&#x27;</i> <i class="k">do</i></div><div class="cl" style="top:836px">      it <i class="s">&#x27;sets the note text&#x27;</i> <i class="k">do</i></div><div class="cl" style="top:872px">        expect(subject.note).to eq <i class="s">&quot;removed time estimate&quot;</i></div><div class="cl" style="top:908px">      <i class="k">end</i></div><div class="cl" style="top:944px">    <i class="k">end</i></div><div class="cl" style="top:980px">  <i class="k">end</i></div><div class="cl" style="top:1052px">  describe <i class="s">&#x27;.change_time_spent&#x27;</i> <i class="k">do</i></div><div class="cl" style="top:1088px">    <i class="c"># We need a custom noteable in order to the shared examples to be green.</i></div><div class="cl" style="top:1124px">    let(<i class="s">:noteable</i>) <i class="k">do</i></div><div class="cl" style="top:1160px">      mr = create(<i class="s">:merge_request</i>, source_project<i class="k">:</i> project)</div><div class="cl" style="top:1196px">      mr.spend_time(duration<i class="k">:</i> <i class="n">360000</i>, user_id<i class="k">:</i> author.id)</div><div class="cl" style="top:1232px">      mr.save!</div><div class="cl" style="top:1268px">      mr</div></div>
  <div class="a" style="left:990px;top:936px;width:28px;height:40px;background:#b3b3b3"></div>
</div>
<div class="a" style="left:2614px;top:224px;width:2px;height:1248px;background:#e3e3e3"></div>
<div class="a" style="left:2616px;top:224px;width:58px;height:1248px;background:#fff"></div>
<div class="a" style="left:2614px;top:1171px;width:30px;height:8px;background:#f5cbd0"></div>
<div class="a" style="left:2644px;top:1174px;width:30px;height:8px;background:#d8f8dc"></div>
<div class="a" style="left:2644px;top:1464px;width:30px;height:8px;background:#d8f8dc"></div>

<div class="a" style="left:580px;top:224px;width:2094px;height:2px;background:#e3e3e3"></div><div class="a" style="left:580px;top:226px;width:2034px;height:9px;background:linear-gradient(#ececec,rgba(240,240,240,0))"></div>
<!-- STATUS BAR -->
<div class="a" style="left:580px;top:1472px;width:2094px;height:54px;background:#fff;border-top:2px solid #e5e5e5">
  <svg class="a" style="left:34px;top:14px" width="20" height="24" viewBox="0 0 20 24"><g fill="none" stroke="#222" stroke-width="2.3"><circle cx="5.3" cy="5" r="2.4"/><circle cx="14.8" cy="5" r="2.4"/><circle cx="5.3" cy="19.6" r="2.4"/><path d="M5.3 7.4V17.2M14.8 7.4C14.8 11.5 9 11.5 5.6 15.5"/></g></svg>
  <div class="sb" style="left:71px;font-family:'Liberation Mono',monospace;font-size:26.6px;color:#2e2e2e">40402-time-estimate-system-notes-can-be-confusing</div>
  <div class="sb" style="left:1119px;top:0;font-size:28.3px">system_note_service_spec.rb</div>
  <div class="sb" style="left:1625px;top:0;font-size:25.7px">LF</div>
  <div class="sb" style="left:1786px;top:0;font-size:28.8px">1194:8</div>
  <div class="sb" style="left:2004px;top:0;font-size:29.8px">ruby</div>
</div>
<div class="a" style="left:2674px;top:80px;width:6px;height:1446px;background:#e5e5e5"></div>

<!-- RIGHT PANEL -->
<div class="a" style="left:2680px;top:80px;width:674px;height:1446px;background:#fafafa;border-top:2px solid #e5e5e5"></div>
<svg class="a" style="left:2690px;top:100px" width="50" height="60" viewBox="0 0 50 60"><g stroke="#222" stroke-linecap="round" stroke-width="4.6"><path d="M15.5 20.7H35.5M15.5 32H35.5M15.5 43.2H35.5"/><path d="M8.4 20.7H8.45M8.4 32H8.45M8.4 43.2H8.45"/></g></svg>
<div class="a" style="left:2759px;top:112px;line-height:56px;font-size:28px;color:#2e2e2e">Staged</div>
<div class="a" style="left:3270px;top:102px;width:12px;height:70px;border-left:2px solid #e5e5e5;border-radius:5px 0 0 5px"></div>
<svg class="a" style="left:3260px;top:95px" width="80" height="85" viewBox="0 0 80 85"><g fill="none" stroke="#5e5e5e" stroke-width="4.6" stroke-linecap="round" stroke-linejoin="round"><path d="M37.5 30L50 41.1L37.5 52.2"/><path d="M51.1 30L63.6 41.1L51.1 52.2"/></g></svg>
<div class="a" style="left:2680px;top:192px;width:668px;height:2px;background:#e5e5e5"></div>
<svg class="a" style="left:2707px;top:241px" width="30" height="30" viewBox="0 0 30 30"><rect x="2" y="2" width="26" height="26" rx="6" fill="none" stroke="#f07a12" stroke-width="2.2"/><circle cx="15" cy="15" r="5.8" fill="#f07a12"/></svg>
<div class="a" style="left:2755px;top:232px;line-height:48px;font-size:28.7px;color:#2e2e2e;white-space:nowrap">spec/services/system_note_service_spec.rb</div>
<div class="a" style="left:2680px;top:833px;width:668px;height:2px;background:#e5e5e5"></div>
<div class="a" style="left:2707px;top:868px;width:608px;height:319px;background:#fff;border:2px solid #dfdfdf;border-radius:4px"></div>
<div class="a" style="left:2728px;top:884px;width:560px;line-height:39.5px;font-size:29px;color:#2e2e2e">Add a comma to the time system notes estimates</div>

<div class="a" style="left:2704px;top:1226px;width:28px;height:28px;border-radius:50%;background:#2f7df6"></div>
<div class="a" style="left:2714px;top:1236px;width:8px;height:8px;border-radius:50%;background:#fff"></div>
<div class="rl" style="top:1218px"><span style="font-size:29.2px">Commit to </span><b style="font-size:31.6px">40402-time-estimate-</b></div>
<div class="rl" style="left:2707px;top:1258px"><b style="font-size:30px">system-notes-can-be-confusing</b> branch</div>
<div class="radio" style="top:1316px"></div>
<div class="rl" style="top:1309px">Create a new branch</div>
<div class="q" style="left:3032px;top:1316px">?</div>
<div class="radio" style="top:1366px"></div>
<div class="rl" style="top:1358px;font-size:28.8px">Create a new branch and merge request</div>
<div class="q" style="left:3283px;top:1366px">?</div>

<div class="a" style="left:2706px;top:1438px;width:144px;height:56px;background:#1f9b45;border-radius:5px;color:#fff;font-size:29px;line-height:56px;text-align:center;-webkit-text-stroke:0.7px #fff">Commit</div>
<div class="a" style="left:3104px;top:1438px;width:211px;height:56px;background:#fff;border:2px solid #dcdcdc;border-radius:6px;color:#2e2e2e;font-size:29px;line-height:51px;text-align:center">Discard draft</div>

</body></html>
